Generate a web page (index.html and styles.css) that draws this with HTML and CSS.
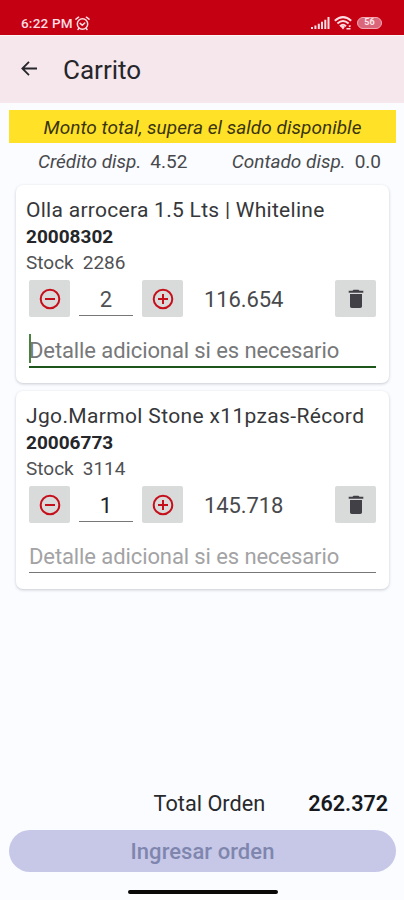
FILE: index.html
```
<!DOCTYPE html>
<html lang="es">
<head>
<meta charset="utf-8">
<meta name="viewport" content="width=device-width, initial-scale=1">
<title>Carrito</title>
<link rel="stylesheet" href="styles.css">
</head>
<body>
<svg class="symbols" aria-hidden="true">
  <symbol id="minus" viewBox="0 0 24 24"><g fill="none" stroke="currentColor" stroke-width="2"><circle cx="12" cy="12" r="9.3"/><path d="M7 12h10"/></g></symbol>
  <symbol id="plus" viewBox="0 0 24 24"><g fill="none" stroke="currentColor" stroke-width="2"><circle cx="12" cy="12" r="9.3"/><path d="M7 12h10M12 7v10"/></g></symbol>
  <symbol id="trash" viewBox="0 0 24 24"><path fill="currentColor" d="M6 19.300c0 .9.800 1.700 1.700 1.700h8.600c.9 0 1.700-.8 1.700-1.700V7H6v12.300zM19.300 3.700h-3.800l-1-1h-5l-1 1H4.700v2h14.600V3.700z"/></symbol>
</svg>
<div class="status">
  <span class="clock">6:22 PM</span>
  <svg class="alarm" viewBox="0 0 15 15" fill="none" stroke="currentColor" stroke-width="1.500" stroke-linecap="round"><circle cx="7.500" cy="8" r="5.200"/><path d="M1 3.200L3.600 1.200M14 3.200L11.400 1.200M5.200 7.400L7.300 9.300L9.700 7M4 12.300L3 13.500M11 12.300L12 13.500"/></svg>
  <svg class="signal" viewBox="0 0 19 12" fill="currentColor"><path d="M0 10h2v2H0zM3.400 8.500h2V12h-2zM6.800 6.700h2V12h-2zM10 4.800h2V12h-2zM13.300 2.700h2V12h-2zM16.500 0h2v12h-2z"/></svg>
  <svg class="wifi" viewBox="0 0 18 15" fill="none" stroke="currentColor" stroke-width="2"><path d="M.8 4.800Q9-2.500 17.200 4.800M3.400 7.600Q9 2.500 14.600 7.600M6 10.200Q9 7.400 12 10.200"/><path d="M6.600 10.600L9 13.500L11 10.800Q9 9 6.600 10.600z" fill="currentColor" stroke="none"/><path d="M12.500 12.800h4M14.800 10.500l1.800-.8" stroke-width="1.500"/></svg>
  <span class="battery">56</span>
</div>
<header class="appbar">
  <svg class="back" viewBox="0 0 18 18" fill="none" stroke="currentColor" stroke-width="2"><path d="M18 9H2M9 1.500L1.500 9L9 16.500"/></svg>
  <h1>Carrito</h1>
</header>
<main>
  <div class="alert"><span>Monto total, supera el saldo disponible</span></div>
  <div class="funds">
    <span class="credit"><i>Crédito disp.</i><b>4.52</b></span>
    <span class="cash"><i>Contado disp.</i><b>0.0</b></span>
  </div>
  <article class="card">
    <h2 class="name-olla">Olla arrocera 1.5 Lts | Whiteline</h2>
    <p class="code">20008302</p>
    <p class="stock"><span>Stock</span><span>2286</span></p>
    <div class="controls">
      <button class="tile red"><svg><use href="#minus"/></svg></button>
      <span class="qty muted">2</span>
      <button class="tile red"><svg><use href="#plus"/></svg></button>
      <span class="price">116.654</span>
      <button class="tile trash"><svg><use href="#trash"/></svg></button>
    </div>
    <div class="detail focused"><span>Detalle adicional si es necesario</span></div>
  </article>
  <article class="card second">
    <h2 class="name-jgo">Jgo.Marmol Stone x11pzas-Récord</h2>
    <p class="code">20006773</p>
    <p class="stock"><span>Stock</span><span>3114</span></p>
    <div class="controls">
      <button class="tile red"><svg><use href="#minus"/></svg></button>
      <span class="qty">1</span>
      <button class="tile red"><svg><use href="#plus"/></svg></button>
      <span class="price">145.718</span>
      <button class="tile trash"><svg><use href="#trash"/></svg></button>
    </div>
    <div class="detail"><span>Detalle adicional si es necesario</span></div>
  </article>
  <div class="total"><span>Total Orden</span><strong>262.372</strong></div>
  <button class="submit"><span>Ingresar orden</span></button>
  <div class="homebar"></div>
</main>
</body>
</html>
```
FILE: styles.css
```
* { box-sizing: border-box; }
body {
  margin: 0;
  width: 404px;
  height: 900px;
  overflow: hidden;
  display: flex;
  flex-direction: column;
  background: #fafcff;
  color: #292a2d;
  font-family: Roboto, "Liberation Sans", sans-serif;
}
h1, h2, p { margin: 0; font-weight: 400; white-space: nowrap; }
span, strong { white-space: nowrap; }
button { border: 0; padding: 0; font: inherit; }
.symbols { position: absolute; width: 0; height: 0; }

.status {
  height: 35px;
  padding: 11px 22px 0 21px;
  display: flex;
  align-items: center;
  background: #c40012;
  color: #ffdde2;
  flex: none;
}
.clock { width: 54px; font-size: 13.5px; font-weight: 500; letter-spacing: .2px; }
.alarm { width: 15px; height: 15px; }
.signal { width: 19px; height: 12px; margin-left: auto; }
.wifi { width: 18px; height: 15px; margin: 0 5px 0 4px; }
.battery {
  width: 25px;
  height: 12px;
  border: 1.5px solid #f3a8b1;
  border-radius: 6px;
  background: #d9667a;
  color: #ffe6ea;
  font-size: 9px;
  font-weight: 700;
  line-height: 9px;
  text-align: center;
}

.appbar {
  height: 68px;
  border-top: 1px solid #fff5f5;
  padding: 0 21px;
  display: flex;
  align-items: center;
  gap: 26px;
  background: #f5e7eb;
  color: #26262b;
  flex: none;
}
.back { width: 16px; height: 17px; margin-bottom: 2px; }
h1 { font-size: 26px; line-height: 32px; }

main { flex: 1; display: flex; flex-direction: column; padding: 7px 8px 0 9px; min-height: 0; }
.alert {
  height: 33px;
  display: flex;
  align-items: center;
  justify-content: center;
  padding-top: 2px;
  background: #ffe227;
  color: #3a3411;
  font-size: 19px;
  font-style: italic;
  letter-spacing: .04px;
}
.funds { display: flex; height: 35px; padding: 0 15px 0 29px; justify-content: space-between; color: #48494c; font-size: 19px; line-height: 37px; }
.funds span { display: flex; gap: 9px; }
.funds b { font-weight: 400; }

.card {
  height: 198px;
  margin: 7px 7px 0;
  padding: 12px 13px 0 10px;
  border-radius: 7px;
  background: #fff;
  box-shadow: 0 1px 3px rgba(50, 55, 70, .25);
  flex: none;
}
.card.second { margin-top: 8px; }
h2 { font-size: 21px; line-height: 26px; color: #36373a; }
.name-olla { letter-spacing: .28px; }
.name-jgo { letter-spacing: .35px; }
.code { font-size: 19px; font-weight: 700; line-height: 28px; height: 26px; color: #252629; }
.stock { display: flex; gap: 9px; font-size: 19px; line-height: 28px; height: 26px; color: #505154; }
.controls { display: flex; height: 37px; margin: 5px 0 0 3px; align-items: stretch; }
.tile { width: 41px; border-radius: 2px; background: #d9dbda; display: grid; place-items: center; flex: none; }
.tile svg { width: 24px; height: 24px; }
.red { color: #c5101c; }
.trash { margin-left: auto; color: #414046; }
.qty { width: 54px; height: 36px; margin: 0 9px; border-bottom: 1px solid #777; text-align: center; font-size: 22px; line-height: 40px; color: #222; }
.qty.muted { color: #505154; }
.price { margin-left: 21px; font-size: 22px; line-height: 40px; letter-spacing: -.1px; color: #48494c; }
.detail { height: 37px; margin: 13px 0 0 3px; border-bottom: 1px solid #777; font-size: 22px; line-height: 41px; letter-spacing: -.1px; color: #a3a3a5; }
.detail.focused { height: 38px; border-bottom: 2px solid #1d561a; color: #777879; position: relative; }
.detail.focused::before { content: ""; position: absolute; left: 0; top: 4px; width: 2px; height: 29px; background: #49813f; }

.total { margin-top: auto; height: 53px; padding-right: 8px; display: flex; justify-content: flex-end; align-items: center; gap: 43px; font-size: 21.7px; }
.total strong { font-size: 21.5px; font-weight: 600; color: #17191c; }
.submit { height: 42px; border-radius: 21px; background: #c7c8e8; color: #7f86ae; font-size: 22px; font-weight: 500; letter-spacing: .05px; flex: none; }
.homebar { width: 150px; height: 4px; border-radius: 2px; margin: 18px auto 6px; background: #080808; flex: none; }
```
